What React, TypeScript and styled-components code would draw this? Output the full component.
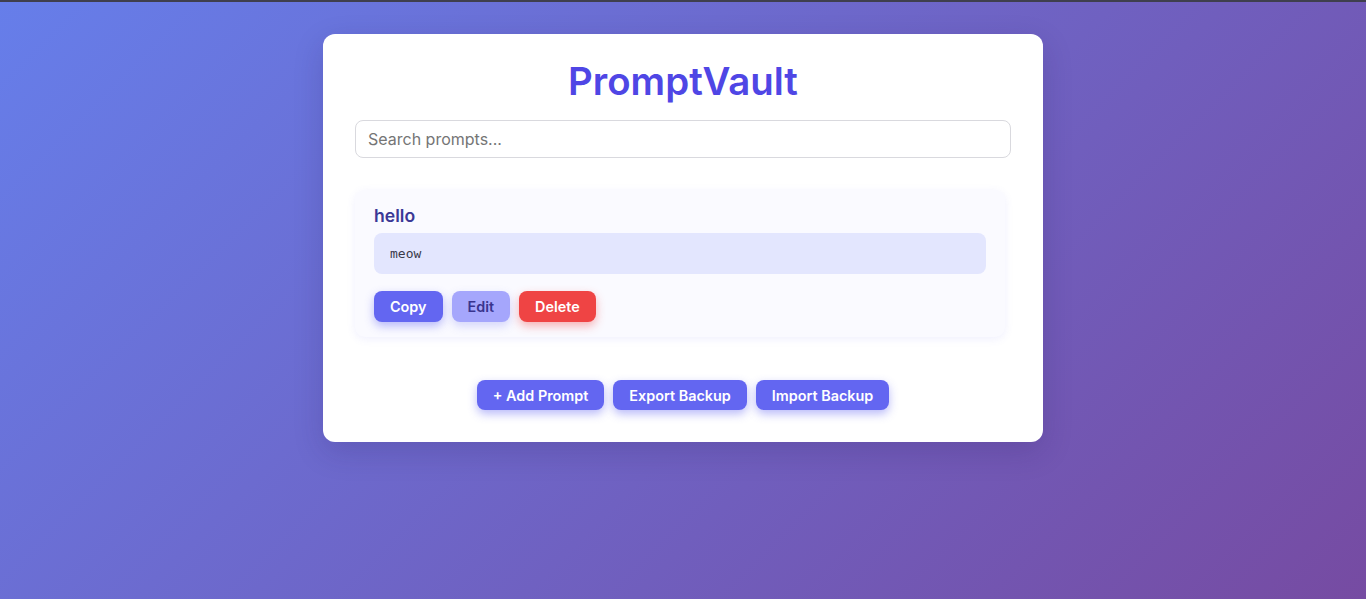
import React from "react";
import styled, { createGlobalStyle } from "styled-components";

const Global = createGlobalStyle`
  html, body { margin: 0; padding: 0; }
  body {
    min-height: 599px;
    font-family: Inter, "Noto Sans", sans-serif;
    background: linear-gradient(135deg, #667eea 0%, #764ba2 100%);
    border-top: 2px solid #3f3f4e;
    box-sizing: border-box;
  }
  * { box-sizing: border-box; }
`;

const Page = styled.div`
  padding: 32px 16px;
`;

const Card = styled.main`
  max-width: 720px;
  margin: 0 auto;
  background: #ffffff;
  border-radius: 12px;
  padding: 24px 32px 32px;
  box-shadow: 0 10px 30px rgba(40, 20, 90, 0.18);
`;

const Title = styled.h1`
  margin: 0 0 16px;
  text-align: center;
  font-size: 38.4px;
  line-height: 46px;
  font-weight: 600;
  color: #4f46e5;
`;

const Search = styled.input`
  display: block;
  width: 100%;
  height: 38px;
  padding: 0 12px;
  font-family: Inter, sans-serif;
  font-size: 16px;
  color: #333;
  border: 1px solid #d9d9de;
  border-radius: 8px;
  outline: none;
  &::placeholder { color: #757575; }
`;

const List = styled.section`
  margin-top: 32px;
  margin-right: 6px;
  display: flex;
  flex-direction: column;
  gap: 16px;
`;

const PromptCard = styled.article`
  background: #fafaff;
  border-radius: 10px;
  padding: 15px 19px 15px;
  box-shadow: 0 2px 8px rgba(99, 102, 241, 0.1);
`;

const PromptTitle = styled.h3`
  margin: 0 0 6px;
  font-size: 17.6px;
  line-height: 22px;
  font-weight: 600;
  color: #3b3896;
`;

const PromptText = styled.pre`
  margin: 0 0 17px;
  background: #e3e6fe;
  border-radius: 8px;
  padding: 12px 16px;
  height: 41px;
  font-family: "DejaVu Sans Mono", "Liberation Mono", monospace;
  font-size: 13px;
  line-height: 17px;
  color: #3a3a4a;
`;

const Row = styled.div<{ $center?: boolean }>`
  display: flex;
  gap: 9px;
  justify-content: ${(p) => (p.$center ? "center" : "flex-start")};
`;

const variants = {
  primary: { bg: "#6366f1", color: "#ffffff", shadow: "rgba(99, 102, 241, 0.45)" },
  soft: { bg: "#a5a6fc", color: "#39348f", shadow: "rgba(99, 102, 241, 0.25)" },
  danger: { bg: "#ef4444", color: "#ffffff", shadow: "rgba(239, 68, 68, 0.4)" },
};

const Button = styled.button<{ $variant: keyof typeof variants; $h?: number }>`
  height: ${(p) => p.$h ?? 30}px;
  padding: 0 16px;
  border: none;
  border-radius: 8px;
  font-family: Inter, sans-serif;
  font-size: 14.4px;
  font-weight: 600;
  background: ${(p) => variants[p.$variant].bg};
  color: ${(p) => variants[p.$variant].color};
  box-shadow: 0 4px 10px ${(p) => variants[p.$variant].shadow};
  cursor: pointer;
`;

const Actions = styled(Row)`
  margin-top: 43px;
`;

export default function App() {
  return (
    <Page>
      <Global />
      <Card>
        <Title>PromptVault</Title>
        <Search placeholder="Search prompts..." />
        <List>
          <PromptCard>
            <PromptTitle>hello</PromptTitle>
            <PromptText>meow</PromptText>
            <Row>
              <Button $variant="primary" $h={31}>Copy</Button>
              <Button $variant="soft" $h={31}>Edit</Button>
              <Button $variant="danger" $h={31}>Delete</Button>
            </Row>
          </PromptCard>
        </List>
        <Actions $center>
          <Button $variant="primary">+ Add Prompt</Button>
          <Button $variant="primary">Export Backup</Button>
          <Button $variant="primary">Import Backup</Button>
        </Actions>
      </Card>
    </Page>
  );
}
